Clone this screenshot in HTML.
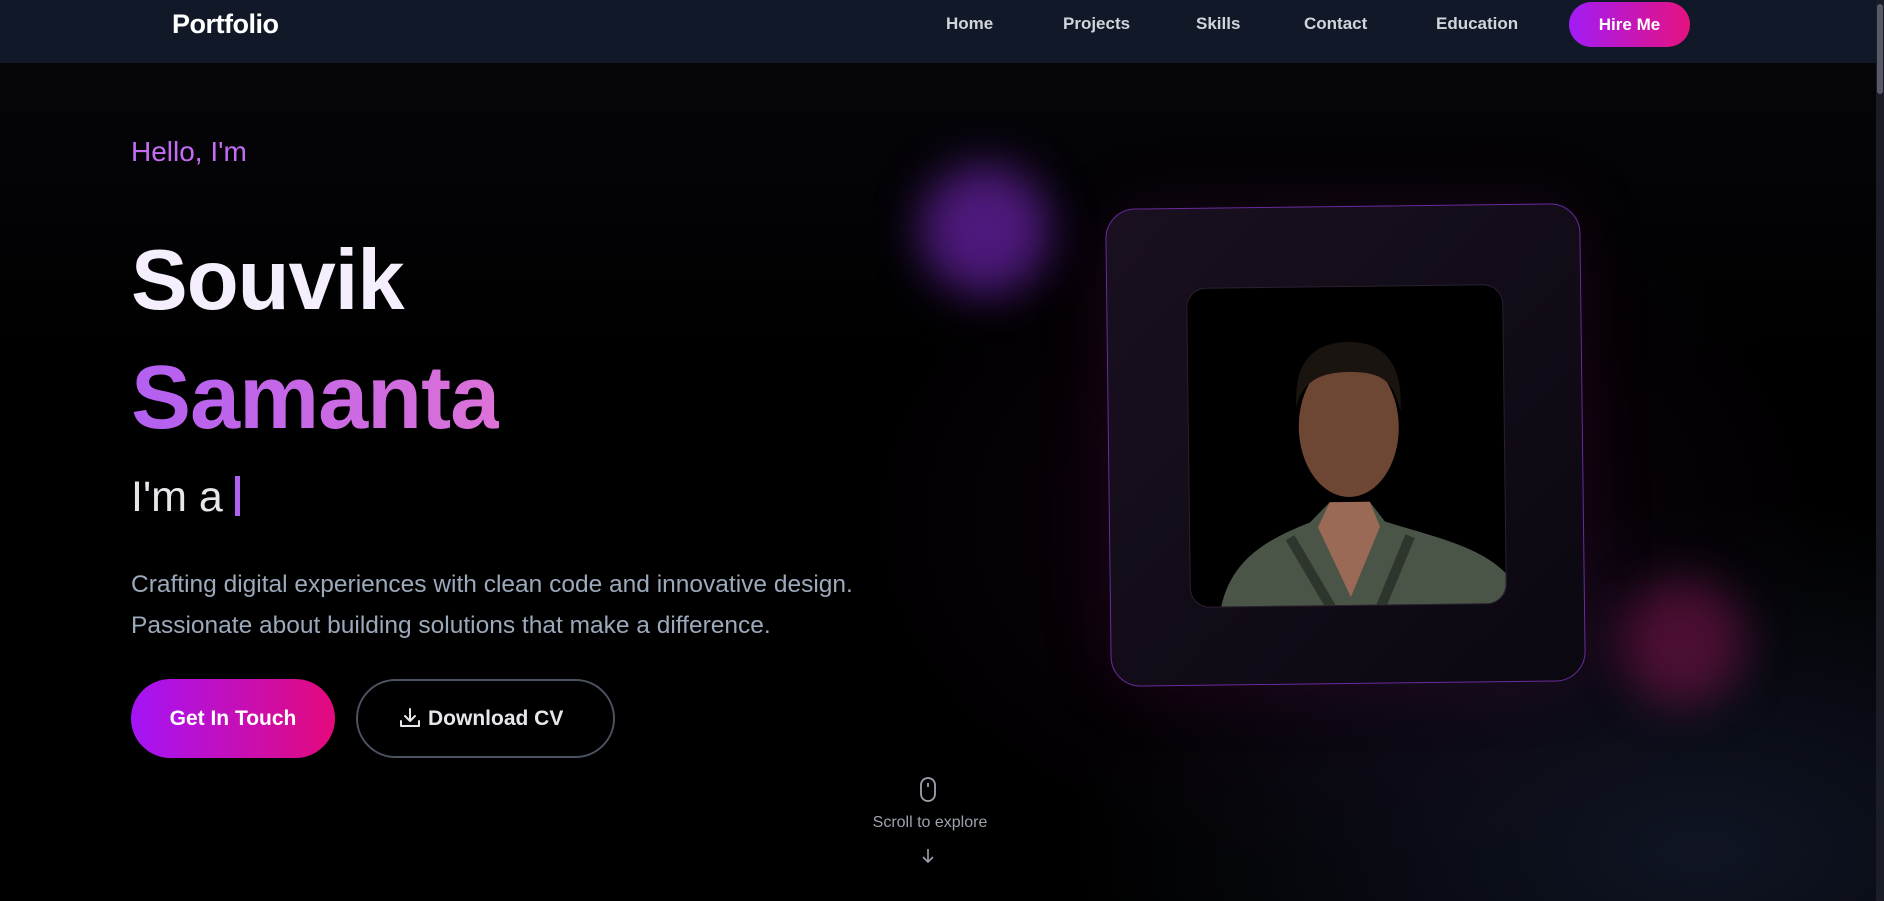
<!DOCTYPE html>
<html><head><meta charset="utf-8"><style>
*{margin:0;padding:0;box-sizing:border-box}
body{width:1884px;height:901px;overflow:hidden;background:#000;font-family:"Liberation Sans",sans-serif;position:relative}
.bg{position:absolute;inset:0;background:radial-gradient(ellipse 700px 500px at 1340px 520px,rgba(60,12,60,.3),transparent 70%),radial-gradient(ellipse 900px 500px at 1700px 850px,rgba(20,26,45,.8),transparent 70%),linear-gradient(180deg,#07060c 0%,#000 40%,#000 100%)}
nav{position:absolute;left:0;top:0;width:1876px;height:63px;background:#111827}
.logo{position:absolute;left:172px;top:9px;color:#fff;font-weight:bold;font-size:27px;letter-spacing:-0.5px}
.nl{position:absolute;top:14px;color:#d1d5db;font-size:17px;font-weight:bold}
.hire{position:absolute;left:1569px;top:2px;width:121px;height:45px;border-radius:23px;background:linear-gradient(90deg,#a21cf5,#e6127f);color:#fff;font-weight:bold;font-size:17px;text-align:center;line-height:45px}
.sb{position:absolute;right:0;top:0;width:8px;height:901px;background:#1a1d26}
.sb i{position:absolute;left:1px;top:4px;width:6px;height:90px;background:#555a66;border-radius:3px}
.t{position:absolute;left:131px;white-space:nowrap}
.blob{position:absolute;border-radius:50%;filter:blur(22px)}
</style></head><body>
<div class="bg"></div>
<div class="blob" style="left:920px;top:165px;width:130px;height:130px;background:rgba(110,35,175,.7)"></div>
<div class="blob" style="left:1620px;top:580px;width:125px;height:125px;background:rgba(130,20,80,.55)"></div>
<nav>
<div class="logo">Portfolio</div>
<div class="nl" style="left:946px">Home</div>
<div class="nl" style="left:1063px">Projects</div>
<div class="nl" style="left:1196px">Skills</div>
<div class="nl" style="left:1304px">Contact</div>
<div class="nl" style="left:1436px">Education</div>
<div class="hire">Hire Me</div>
</nav>
<div class="sb"><i></i></div>
<div class="t" style="top:136px;font-size:28px;color:#c46cf6">Hello, I'm</div>
<div class="t" style="top:232px;font-size:85px;font-weight:bold;color:#f5eefc;letter-spacing:-1px">Souvik</div>
<div class="t" style="top:347px;font-size:90px;font-weight:bold;letter-spacing:-1px;background:linear-gradient(90deg,#b35ff2,#dd72d8);-webkit-background-clip:text;color:transparent">Samanta</div>
<div class="t" style="top:473px;font-size:43px;color:#e5e7eb">I'm a <span style="display:inline-block;width:5px;height:40px;background:#b060f0;vertical-align:-5px"></span></div>
<div class="t" style="top:564px;font-size:24.5px;color:#9ca9bb;line-height:41px">Crafting digital experiences with clean code and innovative design.<br>Passionate about building solutions that make a difference.</div>
<div style="position:absolute;left:131px;top:679px;width:204px;height:79px;border-radius:40px;background:linear-gradient(90deg,#a414f7,#e40a7c);color:#fff;font-weight:bold;font-size:21px;text-align:center;line-height:79px">Get In Touch</div>
<div style="position:absolute;left:356px;top:679px;width:259px;height:79px;border-radius:40px;border:2px solid #4b5260;color:#e5e7eb;font-weight:bold;font-size:21px;line-height:75px;padding-left:42px">
<svg width="24" height="24" viewBox="0 0 24 24" style="position:absolute;left:40px;top:25px" fill="none" stroke="#e5e7eb" stroke-width="2" stroke-linecap="round" stroke-linejoin="round"><path d="M3 15v5h18v-5M12 3v12M7 10l5 5 5-5"/></svg>
<span style="margin-left:28px">Download CV</span></div>
<svg style="position:absolute;left:919px;top:777px" width="18" height="26" viewBox="0 0 18 26" fill="none" stroke="#9ca3af" stroke-width="1.8"><rect x="2" y="1" width="14" height="23" rx="7"/><path d="M9 6v4"/></svg>
<div style="position:absolute;left:828px;top:814px;width:204px;text-align:center;color:#9ca3af;font-size:16px">Scroll to explore</div>
<svg style="position:absolute;left:921px;top:848px" width="14" height="16" viewBox="0 0 14 16" fill="none" stroke="#9ca3af" stroke-width="1.6"><path d="M7 1v13M2 9l5 5 5-5"/></svg>
<div style="position:absolute;left:1108px;top:206px;width:475px;height:478px;border:1.5px solid #6a2b9f;border-radius:30px;transform:rotate(-0.7deg);background:linear-gradient(135deg,#1a1020,#0b0810);box-shadow:0 0 70px rgba(120,25,100,.18)">
<div style="position:absolute;left:79px;top:79px;width:317px;height:320px;border-radius:20px;background:#000;overflow:hidden;border:1px solid #2a2030">
<svg width="317" height="320" viewBox="0 0 317 320">
<path d="M30 320 C40 270 80 250 120 235 L140 215 L180 215 L195 235 C240 250 290 260 317 290 L317 320Z" fill="#4a5548"/>
<path d="M128 240 L160 310 L190 240 L180 215 L140 215Z" fill="#9a6a56"/>
<ellipse cx="160" cy="140" rx="50" ry="70" fill="#6e4634"/>
<path d="M108 120 C105 70 130 55 160 55 C195 55 215 75 212 125 C205 95 195 85 160 85 C125 85 112 100 108 120Z" fill="#1a1410"/>
<path d="M100 250 L140 320 M220 250 L190 320" stroke="#2e352c" stroke-width="10"/>
</svg></div></div>
</body></html>
